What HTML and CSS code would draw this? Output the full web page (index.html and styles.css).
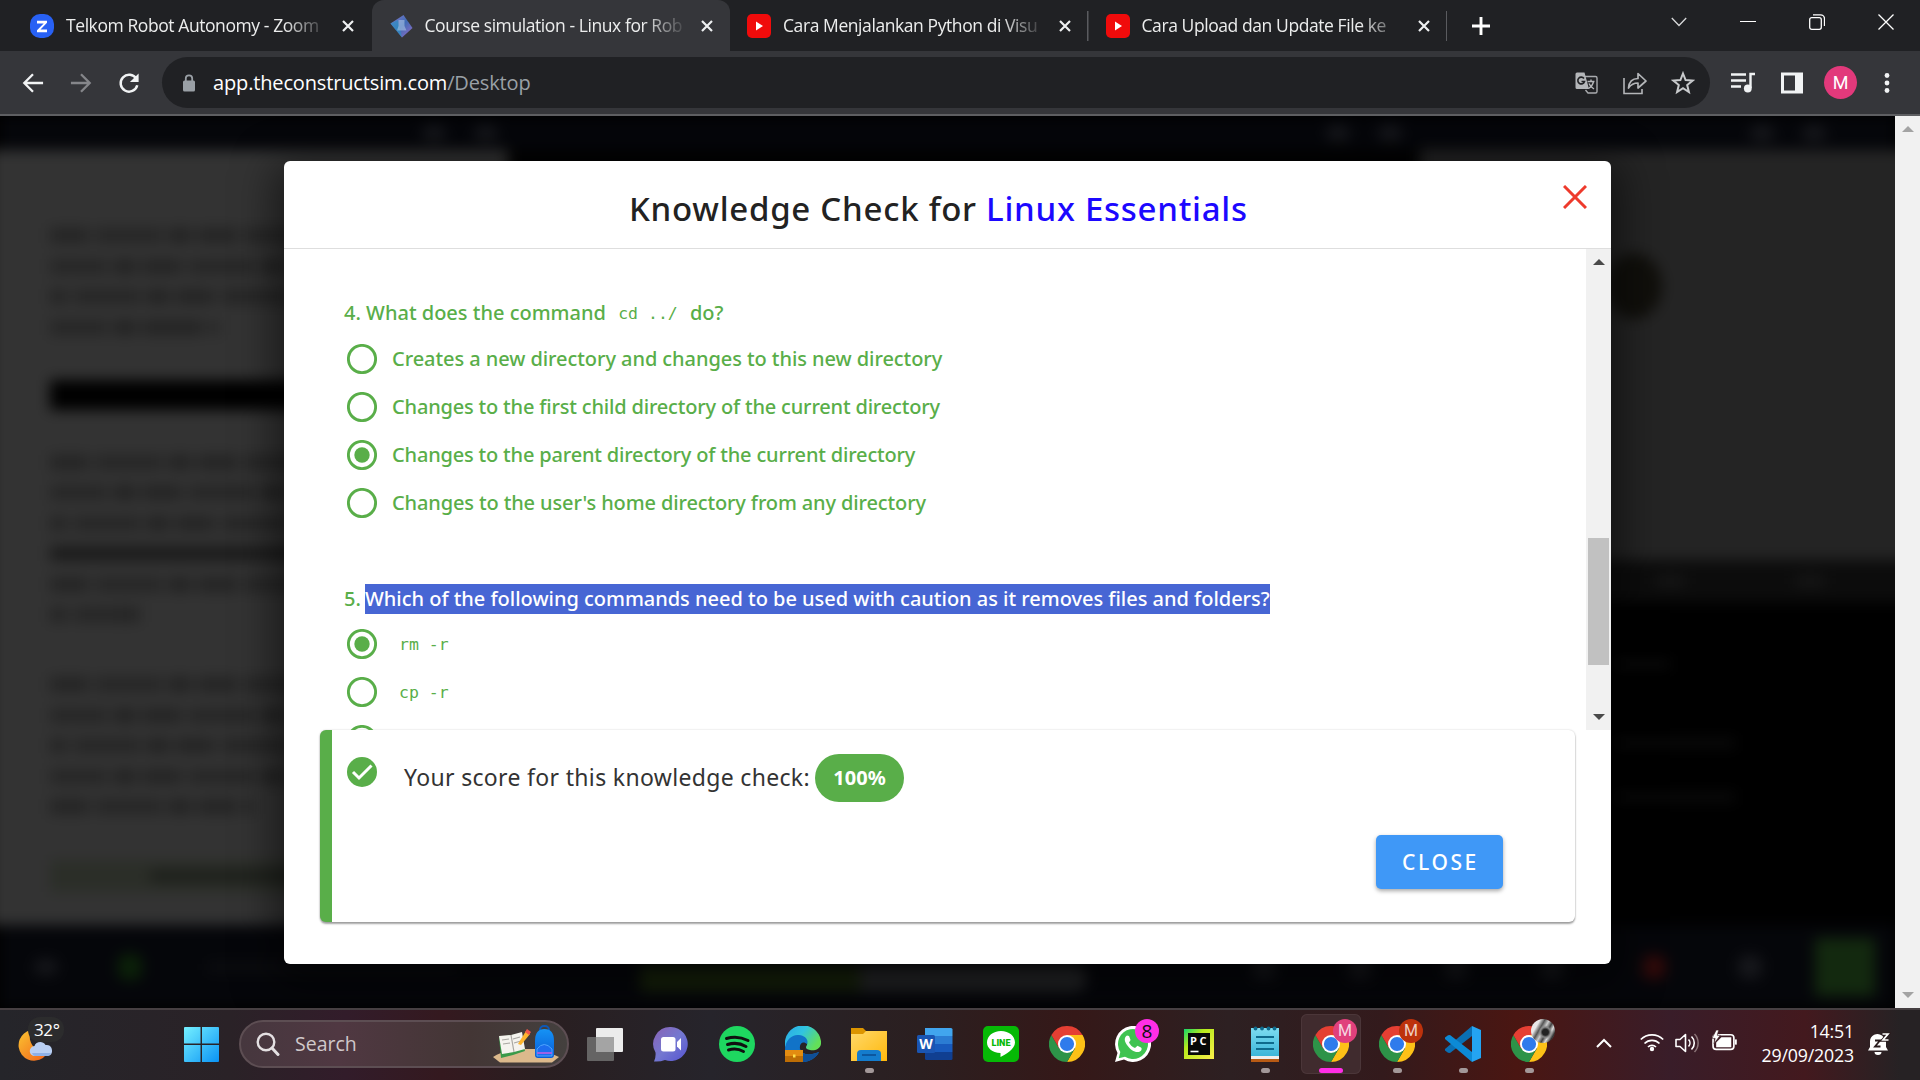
FILE: index.html
```html
<!DOCTYPE html>
<html lang="en">
<head>
<meta charset="utf-8">
<title>Course simulation - Linux for Rob</title>
<link rel="stylesheet" href="styles.css">
</head>
<body>
<svg class="defs" width="0" height="0" aria-hidden="true">
  <defs>
    <linearGradient id="gMoon" x1="0" y1="0" x2="1" y2="1"><stop offset="0" stop-color="#fbc531"/><stop offset="1" stop-color="#f2601a"/></linearGradient>
    <linearGradient id="gWin" x1="0" y1="0" x2="1" y2="1"><stop offset="0" stop-color="#75f0ff"/><stop offset="1" stop-color="#0a93f5"/></linearGradient>
    <linearGradient id="gChat" x1="0" y1="0" x2="1" y2="1"><stop offset="0" stop-color="#8a62b4"/><stop offset=".5" stop-color="#7478d0"/><stop offset="1" stop-color="#5553d2"/></linearGradient>
    <linearGradient id="gEdge" x1="0" y1="0" x2="1" y2=".5"><stop offset="0" stop-color="#28a8e8"/><stop offset=".5" stop-color="#31c4e0"/><stop offset="1" stop-color="#63df58"/></linearGradient>
    <linearGradient id="gFold" x1="0" y1="0" x2="1" y2="1"><stop offset="0" stop-color="#ffd96a"/><stop offset="1" stop-color="#ffb80c"/></linearGradient>
    <linearGradient id="gPc" x1="0" y1="0" x2="1" y2="1"><stop offset="0" stop-color="#12d66b"/><stop offset=".35" stop-color="#b7ea1c"/><stop offset="1" stop-color="#fcf04b"/></linearGradient>
    <linearGradient id="gNote" x1="0" y1="0" x2="0" y2="1"><stop offset="0" stop-color="#7ddcf0"/><stop offset="1" stop-color="#3cb6da"/></linearGradient>
    <linearGradient id="gBag" x1="0" y1="0" x2="0" y2="1"><stop offset="0" stop-color="#1593f5"/><stop offset="1" stop-color="#0a5bd6"/></linearGradient>
    <linearGradient id="gCube" x1="0" y1="0" x2="1" y2="1"><stop offset="0" stop-color="#8b7bd0"/><stop offset=".5" stop-color="#3f6cb5"/><stop offset="1" stop-color="#9a6cc8"/></linearGradient>
    <symbol id="chrome" viewBox="0 0 36 36">
      <path d="M18 9h15.59A18 18 0 0 1 18 36l7.8-13.5Z" fill="#fdc117"/>
      <path d="M2.41 9 10.2 22.5 18 27l7.8-4.5L18 36A18 18 0 0 1 2.41 9Z" fill="#2d9348"/>
      <path d="M18 9h15.59A18 18 0 0 0 2.41 9l7.8 13.5Z" fill="#e53f33"/>
      <circle cx="18" cy="18" r="9" fill="#fff"/><circle cx="18" cy="18" r="7.1" fill="#2f7bec"/>
    </symbol>
    <symbol id="close" viewBox="0 0 14 14"><path d="M2 2l10 10M12 2 2 12" stroke="#eef0f1" stroke-width="2.2"/></symbol>
    <symbol id="youtube" viewBox="0 0 24 24"><rect width="24" height="24" rx="5" fill="#f00b0b"/><path d="M9 7.500v9l7-4.500z" fill="#fff"/></symbol>
    <symbol id="radio" viewBox="0 0 30 30"><circle cx="15" cy="15" r="13.6" fill="none" stroke="#59ae49" stroke-width="2.9"/></symbol>
    <symbol id="radio-on" viewBox="0 0 30 30"><circle cx="15" cy="15" r="13.6" fill="none" stroke="#59ae49" stroke-width="2.9"/><circle cx="15" cy="15" r="7.7" fill="#59ae49"/></symbol>
  </defs>
</svg>

<div class="screen">
  <header class="tabs">
    <div class="tab">
      <svg class="fav" viewBox="0 0 24 24"><rect width="24" height="24" rx="10" fill="#2861f4"/><path d="M7 6.800h10v2L10.500 15.500H17v2.700H7v-2l6.700-6.700H7z" fill="#fff"/></svg>
      <span class="tab-title">Telkom Robot Autonomy - Zoom</span>
      <svg class="tab-x"><use href="#close"/></svg>
    </div>
    <div class="tab active">
      <svg class="fav" viewBox="0 0 24 24"><path d="M14.500 1 23.500 14 13 23.500 1.500 9.500z" fill="url(#gCube)"/><path d="M1.500 9.500 9 6l4 17.500z" fill="#2f8fc0" opacity=".7"/><path d="M9.500 6h6v6l2 4.500H8l1.500-4.500z" fill="#a9c3e2" opacity=".6"/></svg>
      <span class="tab-title">Course simulation - Linux for Rob</span>
      <svg class="tab-x"><use href="#close"/></svg>
    </div>
    <div class="tab sep">
      <svg class="fav"><use href="#youtube"/></svg>
      <span class="tab-title">Cara Menjalankan Python di Visu</span>
      <svg class="tab-x"><use href="#close"/></svg>
    </div>
    <div class="tab sep">
      <svg class="fav"><use href="#youtube"/></svg>
      <span class="tab-title">Cara Upload dan Update File ke</span>
      <svg class="tab-x"><use href="#close"/></svg>
    </div>
    <svg class="plus" viewBox="0 0 18 18"><path d="M9 0v18M0 9h18" stroke="#fff" stroke-width="2.900"/></svg>
    <div class="winctl">
      <svg viewBox="0 0 16 16"><path d="M.8 4 8 11.500 15.200 4" fill="none" stroke="#d8d9da" stroke-width="1.300"/></svg>
      <svg viewBox="0 0 16 16"><path d="M0 7.500h16" stroke="#fff" stroke-width="1"/></svg>
      <svg viewBox="0 0 16 16"><rect x=".7" y="3.700" width="11.600" height="11.600" rx="2" fill="none" stroke="#fff" stroke-width="1.300"/><path d="M4 .8h7.500a4 4 0 0 1 4 4V12" fill="none" stroke="#fff" stroke-width="1.300"/></svg>
      <svg viewBox="0 0 16 16"><path d="M.5.5l15 15M15.500.5l-15 15" stroke="#fff" stroke-width="1.300"/></svg>
    </div>
  </header>

  <div class="toolbar">
    <div class="nav">
      <svg viewBox="0 0 24 24"><path d="M23 12H3.500M12 2.500 2.500 12l9.500 9.500" fill="none" stroke="#f1f3f4" stroke-width="2.500"/></svg>
      <svg viewBox="0 0 24 24"><path d="M1 12h19.500M12 2.500l9.500 9.500-9.500 9.500" fill="none" stroke="#85868a" stroke-width="2.500"/></svg>
      <svg viewBox="0 0 24 24"><path d="M20 7.500A9.200 9.200 0 1 0 21 14.500" fill="none" stroke="#f1f3f4" stroke-width="2.700"/><path d="M22.500 1.500v9.500H13z" fill="#f1f3f4"/></svg>
    </div>
    <div class="omnibox">
      <svg class="lock" viewBox="0 0 14 18"><rect x="1" y="6.500" width="12" height="11" rx="1.500" fill="#9aa0a6"/><path d="M3.800 7V4.500a3.200 3.200 0 0 1 6.400 0V7" fill="none" stroke="#9aa0a6" stroke-width="1.800"/></svg>
      <span class="url">app.theconstructsim.com<span class="path">/Desktop</span></span>
      <div class="omni-icons">
        <svg viewBox="0 0 24 24"><path d="M9 5.500h11.500a1.500 1.500 0 0 1 1.500 1.500v13.500a1.500 1.500 0 0 1-1.500 1.500H13l-2.500-3" fill="none" stroke="#a9abae" stroke-width="1.400"/><path d="M2 1.500h7.500L14 18H2a1.500 1.500 0 0 1-1.500-1.500V3A1.500 1.500 0 0 1 2 1.500z" fill="#b4b6b9"/><path d="M9 7.500A3.400 3.400 0 1 0 9.500 10.500H6.500" fill="none" stroke="#202124" stroke-width="1.600"/><path d="M12.500 10.500h7M16 8.500v2M18.500 10.500c-.7 3.500-2.500 5.500-5 7M14 12.500c1 2.500 2.500 4 5 5.500" fill="none" stroke="#b4b6b9" stroke-width="1.400"/></svg>
        <svg viewBox="0 0 24 24"><path d="M1 7v15.500h18V18" fill="none" stroke="#b4b6b9" stroke-width="1.600"/><path d="M5.500 17c.5-6 4-9.500 9.500-9.500v-5L23 10l-8 7v-5c-4 0-7 1.500-9.500 5z" fill="none" stroke="#b4b6b9" stroke-width="1.700" stroke-linejoin="round"/></svg>
        <svg viewBox="0 0 24 24"><path d="m12 2.500 2.600 6.600 7 .5-5.400 4.500 1.700 6.900-5.900-3.800L6.100 21l1.700-6.900L2.400 9.600l7-.5z" fill="none" stroke="#c8cacc" stroke-width="2"/></svg>
      </div>
    </div>
    <div class="actions">
      <svg viewBox="0 0 24 24"><path d="M0 3.500h15M0 9.500h15M0 15.500h10" stroke="#f1f3f4" stroke-width="2.400"/><path d="M24 3h-4.500v14" fill="none" stroke="#f1f3f4" stroke-width="2.400"/><circle cx="16.800" cy="17.500" r="3.900" fill="#f1f3f4"/></svg>
      <svg viewBox="0 0 24 24"><path fill-rule="evenodd" d="M1 1.500h22v21H1zM4 4.500v15h11v-15z" fill="#f1f3f4"/></svg>
      <span class="avatar">M</span>
      <svg class="kebab" viewBox="0 0 24 24"><g fill="#f1f3f4"><circle cx="12" cy="4.500" r="2.400"/><circle cx="12" cy="12" r="2.400"/><circle cx="12" cy="19.500" r="2.400"/></g></svg>
    </div>
  </div>

  <main class="page">
    <div class="stage">
      <div class="backdrop">
        <div class="b-top"><i class="dot"></i><i class="dot"></i><i class="dot gap"></i><i class="dot"></i><i class="dot gap2"></i><i class="dot"></i></div>
        <div class="b-main">
          <div class="b-notes">
            <div class="para"><i class="w9"></i><i></i><i></i><i class="w4"></i></div>
            <div class="strip"></div>
            <div class="para p2"><i></i><i></i><i></i><i class="dark"></i><i></i><i class="w2"></i></div>
            <div class="para p3"><i></i><i></i><i></i><i></i><i class="w5"></i></div>
            <div class="task"><i></i></div>
          </div>
          <div class="b-mid"></div>
          <div class="b-right">
            <div class="sim"><i></i></div>
            <div class="term-bar"><i></i><i></i><i></i></div>
            <div class="term"><div class="lines"><i></i><i></i><i></i></div><div class="thumb"></div></div>
          </div>
        </div>
        <div class="b-foot">
          <i class="dot"></i><i class="dot green"></i><i class="txt"></i>
          <div class="meter"><i></i><i></i></div>
          <div class="foot-icons"><i class="dot"></i><i class="dot"></i><i class="dot"></i><i class="dot"></i><i class="dot red"></i><i class="dot"></i></div>
          <i class="help"></i>
        </div>
      </div>

      <section class="modal">
        <div class="modal-head">
          <h1>Knowledge Check for <b>Linux Essentials</b></h1>
          <svg class="modal-x" viewBox="0 0 24 24"><path d="M1 1l22 22M23 1 1 23" stroke="#ee3a2c" stroke-width="3"/></svg>
        </div>
        <div class="modal-body">
          <div class="quiz">
            <div class="question">
              <p class="ask a4">4. What does the command <code>cd ../</code> do?</p>
              <label class="opt"><svg><use href="#radio"/></svg><span class="o1">Creates a new directory and changes to this new directory</span></label>
              <label class="opt"><svg><use href="#radio"/></svg><span class="o2">Changes to the first child directory of the current directory</span></label>
              <label class="opt"><svg><use href="#radio-on"/></svg><span class="o3">Changes to the parent directory of the current directory</span></label>
              <label class="opt"><svg><use href="#radio"/></svg><span class="o4">Changes to the user's home directory from any directory</span></label>
            </div>
            <div class="question">
              <p class="ask a5"><span class="num">5.</span><mark>Which of the following commands need to be used with caution as it removes files and folders?</mark></p>
              <label class="opt"><svg><use href="#radio-on"/></svg><code>rm -r</code></label>
              <label class="opt"><svg><use href="#radio"/></svg><code>cp -r</code></label>
              <label class="opt"><svg><use href="#radio"/></svg></label>
            </div>
          </div>
          <div class="scroll">
            <svg viewBox="0 0 12 6"><path d="M0 6 6 0l6 6z" fill="#4a4a4a"/></svg>
            <i></i>
            <svg viewBox="0 0 12 6"><path d="M0 0h12L6 6z" fill="#4a4a4a"/></svg>
          </div>
        </div>
        <div class="score">
          <div class="score-row">
            <svg class="tick" viewBox="0 0 30 30"><circle cx="15" cy="15" r="15" fill="#59ae49"/><path d="m6 15 6 6L24.500 8.500" fill="none" stroke="#fff" stroke-width="3"/></svg>
            <span class="score-text">Your score for this knowledge check:</span>
            <span class="chip">100%</span>
          </div>
          <button class="close-btn">CLOSE</button>
        </div>
      </section>
    </div>
    <div class="page-scroll">
      <svg viewBox="0 0 12 6"><path d="M0 6 6 0l6 6z" fill="#a3a3a3"/></svg>
      <svg viewBox="0 0 12 6"><path d="M0 0h12L6 6z" fill="#a3a3a3"/></svg>
    </div>
  </main>

  <footer class="taskbar">
    <div class="weather">
      <svg width="36" height="36" viewBox="0 0 36 36"><path d="M13 3A15.500 15.500 0 1 0 30 25C18 27 8 15 13 3z" fill="url(#gMoon)"/><path d="M17 29a5 5 0 0 1-.5-10c1-4 8-6 11-1 6-1 7 5 6.500 7-.5 3-3 4-5 4z" fill="#b9cff3"/><path d="M14 26h19c-1 2-2.500 3-4 3H17c-1.500 0-2.500-1.500-3-3z" fill="#8fb0e6"/></svg>
      <span>32°</span>
    </div>
    <svg class="start" viewBox="0 0 36 36"><path d="M1 0h16v17H0V1a1 1 0 0 1 1-1zM18.500 0H35a1 1 0 0 1 1 1v16H18.500zM0 18.500h17V36H1a1 1 0 0 1-1-1zM18.500 18.500H36V35a1 1 0 0 1-1 1H18.500z" fill="url(#gWin)"/></svg>
    <div class="search">
      <svg class="mag" viewBox="0 0 24 24"><circle cx="10" cy="10" r="8.300" fill="none" stroke="#e4e0e2" stroke-width="2.400"/><path d="m16 16 6 6.500" stroke="#e4e0e2" stroke-width="3" stroke-linecap="round"/></svg>
      <span>Search</span>
      <svg class="art" viewBox="0 0 68 38"><path d="M1 32q12-8 30-8h18l18 8-7 5.500H8z" fill="#dcb98c"/><path d="m7 12 13-2 9-2 4 18-12 4-12 3z" fill="#3a9a4a"/><path d="m7 11 12-1 11-3 3 17-11 3-12 2z" fill="#f5f3ee"/><path d="m19 10 3 17M10 15l7-1M11 19l7-1M21 14l7-2M22 18l7-2" stroke="#a9a7a2" stroke-width="1.200"/><path d="M26 19 34 6l4 3-9 11z" fill="#ffb52e"/><path d="m33 7 2-3 4 3-2 3z" fill="#f2574c"/><rect x="48" y="1" width="9" height="8" rx="4" fill="none" stroke="#0d58b8" stroke-width="2"/><path d="M43 16q0-12 9.500-12T62 16v14q0 3-3 3H46q-3 0-3-3z" fill="url(#gBag)"/><path d="M45 24q7-9 15 0v7H45z" fill="#1d6dee" stroke="#4ea6ff"/><path d="M45 28h15" stroke="#9c62e6" stroke-width="2"/></svg>
    </div>
    <nav class="apps">
      <div class="app"><svg viewBox="0 0 36 36"><rect x="9" y="2" width="27" height="24" rx="1" fill="#ececec"/><rect y="11" width="27" height="24" rx="1" fill="#6c6c6c" opacity=".9"/><rect x="9" y="11" width="18" height="15" fill="#a4a4a4"/></svg></div>
      <div class="app"><svg viewBox="0 0 36 36"><path d="M18 1a17 17 0 1 1-6 33q-5 2-11 1.500 2-4 1.500-9A17 17 0 0 1 18 1z" fill="url(#gChat)"/><rect x="8" y="11" width="14.500" height="14.500" rx="2.500" fill="#fff"/><path d="m24 16 4-4v12.500l-4-4z" fill="#fff"/></svg></div>
      <div class="app"><svg viewBox="0 0 36 36"><circle cx="18" cy="18" r="18" fill="#1ed760"/><path d="M7.500 12.500q11-3.500 21.500 2M8.500 18.500q10-3 18.500 2M9.500 24q8-2.500 15 1.500" fill="none" stroke="#101010" stroke-width="3" stroke-linecap="round"/></svg></div>
      <div class="app"><svg viewBox="0 0 36 36"><path d="M0 20A18 18 0 0 1 36 15c1 7-5 10-11 9-4-1-5-2-3-5 1-4-2-8-7-8S0 16 0 24z" fill="url(#gEdge)"/><path d="M0 24C0 13 8 8 14 9c6 .5 10 5 8 9-3-3-8-2-7 5 2 6 9 7 19 3-4 8-13 11-20 10C5 35 0 30 0 24z" fill="#1173c8"/><path d="M15 23c2 6 9 7 19 3-4 8-13 11-20 10z" fill="#0f4f97"/><rect y="24" width="18" height="12" fill="#bd6d05"/><path d="M0 24h18v6H0z" fill="#e38c11"/><rect x="8" y="28.500" width="2.500" height="3" fill="#ffdf48"/></svg></div>
      <div class="app run"><svg viewBox="0 0 36 36"><path d="M0 2h12l3 3v5H0z" fill="#dc9500"/><path d="M0 8h12l3-3h21v30H0z" fill="url(#gFold)"/><path d="M6 35V28q0-4 4-4h16q4 0 4 4v7z" fill="#147ccd"/><path d="M11 29h14" stroke="#0b4f93" stroke-width="1.600"/></svg></div>
      <div class="app"><svg viewBox="0 0 36 36"><path d="M8 2h26a1.500 1.500 0 0 1 1.500 1.500V10H8z" fill="#41a5ee"/><path d="M8 10h27.500v8H8z" fill="#2b7cd3"/><path d="M8 18h27.500v8H8z" fill="#185abd"/><path d="M8 26h27.500v6.500A1.500 1.500 0 0 1 34 34H9.500A1.500 1.500 0 0 1 8 32.500z" fill="#103f91"/><rect y="9" width="18" height="18" rx="1.500" fill="#1a55b2"/><text x="9" y="23" class="word-w">W</text></svg></div>
      <div class="app"><svg viewBox="0 0 36 36"><rect width="36" height="36" rx="5" fill="#06b906"/><path d="M18 5c8 0 14 5 14 11.500C32 23 22 29 17.500 31v-4C9 26.500 4 22 4 16.500 4 10 10 5 18 5z" fill="#fff"/><text x="18" y="20" class="line-t" textLength="19" lengthAdjust="spacingAndGlyphs">LINE</text></svg></div>
      <div class="app"><svg><use href="#chrome"/></svg></div>
      <div class="app"><svg viewBox="0 0 36 36"><path d="M0 36 2.500 27A18 18 0 1 1 9 33.500z" fill="#fff"/><path d="M3.700 32.300 5.300 26A15 15 0 1 1 10 30.700z" fill="#3fc351"/><path d="M12 9.500c-3 2-3 5.500 0 9.500 4 5.500 9 8.500 13 6.500 2-1 2-3.500 1-4l-3.500-1.800-2.500 2.300c-3-1-5-3.500-6-5.500l1.600-2.500L14 10z" fill="#fff"/></svg><span class="badge count">8</span></div>
      <div class="app"><svg viewBox="0 0 36 36"><rect x="3" y="3" width="30" height="30" fill="url(#gPc)"/><rect x="7" y="7" width="22" height="22" fill="#080a08"/><text x="9" y="18.500" class="pc-t" textLength="16.500">PC</text><path d="M9.500 25.500h8" stroke="#fff" stroke-width="1.600"/></svg></div>
      <div class="app run"><svg viewBox="0 0 36 36"><path d="M4 30h28v6H4z" fill="#b85a14"/><path d="M4 28h28v5H4z" fill="#eee"/><path d="M4 2h28v28H4z" fill="url(#gNote)"/><path d="M9 11h18M9 17h18M9 23h18" stroke="#0e6a8c" stroke-width="2"/><g fill="#0e6a8c"><circle cx="8.500" cy="2.500" r="1.900"/><circle cx="15" cy="2.500" r="1.900"/><circle cx="21.500" cy="2.500" r="1.900"/><circle cx="27.500" cy="2.500" r="1.900"/></g></svg></div>
      <div class="app current"><svg><use href="#chrome"/></svg><span class="badge pink">M</span></div>
      <div class="app run"><svg><use href="#chrome"/></svg><span class="badge rust">M</span></div>
      <div class="app run"><svg viewBox="0 0 36 36"><path d="M27 0v10L5 27l-2-.2L0 24.500v-1.500z" fill="#0a6fb4"/><path d="M27 36V26L5 9l-2 .2L0 11.500V13z" fill="#0c8ad6"/><path d="m27 0 9 4v28l-9 4z" fill="#24a4f2"/></svg></div>
      <div class="app run"><svg><use href="#chrome"/></svg><span class="badge photo"></span></div>
    </nav>
    <div class="tray">
      <svg class="t-up" viewBox="0 0 18 18"><path d="m2 13 7-7 7 7" fill="none" stroke="#fff" stroke-width="2"/></svg>
      <svg class="t-wifi" viewBox="0 0 24 24"><g fill="none" stroke="#fff" stroke-width="1.700"><path d="M.8 9.500a16 16 0 0 1 22.400 0M4.500 13.500a10.600 10.600 0 0 1 15 0M8 17a5.800 5.800 0 0 1 8 0"/></g><circle cx="12" cy="19" r="2.200" fill="#fff"/></svg>
      <svg class="t-vol" viewBox="0 0 24 24"><path d="M1 8.500h4L10.500 3.500v17L5 15.500H1z" fill="none" stroke="#fff" stroke-width="1.600" stroke-linejoin="round"/><path d="M13.500 8.500a5 5 0 0 1 0 7M16.500 5.500a9 9 0 0 1 0 13" fill="none" stroke="#fff" stroke-width="1.600"/><path d="M19.500 3a13 13 0 0 1 0 18" fill="none" stroke="#8b7478" stroke-width="1.500"/></svg>
      <svg class="t-bat" viewBox="0 0 24 24"><rect x="1" y="5.500" width="20" height="14" rx="3" fill="none" stroke="#fff" stroke-width="1.600"/><path d="M4 17.500V13l5-5h9.500v9.500z" fill="#fff"/><path d="M22 10h1.800v5H22z" fill="#fff"/><path d="M4 1 0 9h3l-1 5 6-8H5l1.500-5z" fill="#fff" stroke="#3a1c20" stroke-width=".6"/></svg>
      <div class="clock"><span>14:51</span><span>29/09/2023</span></div>
      <svg class="t-bell" viewBox="0 0 24 24"><path d="M1 18.500 3 15V9.500a7.500 7.500 0 0 1 12-6L19 8v7l2 3.500zM7.500 20h7a3.500 3 0 0 1-7 0z" fill="#fff"/><path d="M16 2h5l-5 6h5.500" fill="none" stroke="#2a1c1e" stroke-width="3.500"/><path d="M15.500 2h5.500l-5 6h5.500" fill="none" stroke="#fff" stroke-width="1.700"/><path d="M8 8.500h5l-5 6h5.500" fill="none" stroke="#2a1c1e" stroke-width="1.800"/></svg>
    </div>
  </footer>
</div>
</body>
</html>
```
FILE: styles.css
```css
* { box-sizing: border-box; }
body { margin: 0; background: #000; overflow: hidden; }
svg { display: block; flex: none; }
.defs { position: absolute; }
.screen {
  width: 1920px; height: 1080px; display: grid;
  grid-template-rows: 51px 65px 892px 72px;
  font-family: "Open Sans", "Noto Sans", sans-serif;
}

/* tab strip */
.tabs { background: #202124; display: flex; padding-left: 13px; }
.tab { width: 358.500px; height: 51px; display: flex; align-items: center; padding-left: 17px; flex: none; }
.tab.sep { background: linear-gradient(#5a5b5f, #5a5b5f) right 0 top 11px / 1.500px 30px no-repeat; }
.tab.active { background: #35363a; border-radius: 12px 12px 0 0; }
.fav { width: 24px; height: 24px; }
.tab-title {
  width: 260px; margin: -2px 0 0 12px; overflow: hidden; white-space: nowrap;
  color: #eceded; font-size: 17.500px; letter-spacing: -.42px;
  mask-image: linear-gradient(90deg, #000 84%, transparent 101%);
}
.tab-x { width: 14px; height: 14px; margin-left: 15px; }
.plus { width: 18px; height: 18px; margin: 17px 0 0 25px; }
.winctl { display: flex; gap: 53px; margin: 14px 26px 0 auto; }
.winctl svg { width: 16px; height: 16px; }

/* toolbar */
.toolbar { background: #35363a; border-bottom: 2px solid #5e5f62; display: flex; align-items: flex-start; padding-top: 6px; }
.nav { display: flex; gap: 26px; margin: 15px 20px 0 22px; width: 120px; flex: none; }
.nav svg { width: 22px; height: 22px; }
.omnibox { width: 1548px; height: 51px; border-radius: 26px; background: #202124; display: flex; align-items: center; padding: 0 15px 0 20px; }
.lock { width: 14px; height: 18px; }
.url { margin-left: 17px; color: #fff; font-size: 20px; letter-spacing: -.15px; }
.path { color: #9aa0a6; }
.omni-icons { display: flex; gap: 24px; margin-left: auto; }
.omni-icons svg { width: 24px; height: 24px; }
.actions { display: flex; align-items: center; gap: 25px; height: 51px; margin-left: 21px; }
.actions svg { width: 24px; height: 24px; }
.avatar { width: 33px; height: 33px; margin: 0 -5px; border-radius: 50%; background: #e2397b; color: #fff; font: 18px/33px Roboto, sans-serif; text-align: center; }
.actions .kebab { margin-left: -2px; }

/* page area: blurred workspace with dialog stacked above it */
.page { display: grid; grid-template-columns: 1895px 25px; }
.stage { display: grid; height: 892px; overflow: hidden; background: #000; }
.backdrop, .modal { grid-area: 1 / 1; }
.backdrop { height: 892px; display: grid; grid-template-rows: 34px 775px 83px; filter: blur(7px); }
.backdrop i { display: block; }
.b-top, .b-foot { background: #05060a; display: flex; align-items: center; }
.dot { width: 24px; height: 16px; border-radius: 8px; background: #16171b; flex: none; }
.b-top { padding-left: 422px; gap: 28px; }
.gap { margin-left: 800px; }
.gap2 { margin-left: 320px; }
.b-main { display: grid; grid-template-columns: 508px 912px 475px; }
.b-notes { background: #333; margin-left: -10px; padding: 73px 0 0 60px; }
.para { display: flex; flex-direction: column; gap: 15.500px; padding-top: 5px; }
.para i { height: 15px; background: repeating-linear-gradient(90deg, #242424 0 38px, #303030 38px 46px, #262626 46px 112px, #303030 112px 119px, #232323 119px 141px, #303030 141px 148px); }
.para i:nth-child(2n) { background-position-x: -55px; }
.para i:nth-child(3n) { background-position-x: -22px; }
.para .w9 { width: 95%; }
.para .w4 { width: 170px; }
.para .w2 { width: 90px; }
.para .w5 { width: 205px; }
.para .dark { background: #1b1b1b; }
.strip { height: 30px; margin-top: 45px; background: #000; }
.p2 { padding-top: 45px; }
.p3 { padding-top: 55px; }
.task { height: 32px; margin-top: 46px; background: #2b2e28; padding: 10px 0 0 100px; }
.task i { height: 12px; background: #1d1f1b; }
.b-mid { background: #020202; }
.b-right { display: grid; grid-template-rows: 410px 42px 323px; margin-right: -10px; }
.sim { background: #242424; padding: 103px 0 0 186px; }
.sim i { width: 56px; height: 66px; border-radius: 50%; background: #100f0b; }
.term-bar { background: #0c0c0c; display: flex; align-items: center; gap: 110px; padding-left: 235px; }
.term-bar i { width: 30px; height: 10px; background: #171717; }
.term { background: #000; display: flex; justify-content: space-between; padding-right: 15px; }
.lines { padding: 58px 0 0 195px; display: grid; gap: 46px; align-content: start; }
.lines i { width: 120px; height: 8px; background: #0d0d0d; }
.lines i:first-child { width: 55px; margin-bottom: 25px; }
.thumb { width: 25px; height: 272px; background: linear-gradient(#2b2b2b 0 25%, #202020 30% 85%, #2b2b2b); }
.b-foot { padding-left: 34px; }
.green { background: #0b2109; height: 26px; margin-left: 60px; }
.txt { width: 250px; height: 10px; margin-left: 65px; background: #0c0d10; }
.meter { display: flex; margin: 23px 0 0 183px; }
.meter i { width: 220px; height: 26px; background: #16210a; }
.meter i + i { width: 227px; background: #232426; border-radius: 0 13px 13px 0; }
.foot-icons { display: flex; gap: 72px; margin-left: 165px; }
.foot-icons .dot { height: 24px; }
.foot-icons .red { background: #300a0a; margin-left: 6px; }
.help { width: 60px; height: 58px; margin-left: 53px; background: #13290f; }

/* dialog */
.modal { width: 1327px; height: 803px; margin: 45px 0 0 284px; background: #fff; border-radius: 6px; box-shadow: 0 12px 40px 10px rgba(0, 0, 0, .5); z-index: 1; font-family: "Noto Sans", sans-serif; }
.modal-head { height: 88px; border-bottom: 1.500px solid #dedede; display: flex; justify-content: space-between; padding: 24px 24px 0 345px; }
h1 { margin: 0; font-size: 33px; line-height: 48px; font-weight: 500; color: #222; letter-spacing: .74px; white-space: nowrap; }
h1 b { font-weight: 500; color: #1c08ff; }
.modal-x { width: 24px; height: 24px; }
.modal-body { height: 481px; display: flex; justify-content: space-between; overflow: hidden; }
.quiz { padding: 49px 0 0 60px; color: #59ae49; font-size: 20px; font-weight: 500; white-space: nowrap; }
.question { height: 285px; }
.ask { margin: 0; height: 36.500px; line-height: 30px; display: flex; white-space: pre; }
.a5 { padding-top: 1px; }
code { font: 16.500px/30px "DejaVu Sans Mono", monospace; }
.a4 code { margin: 0 7px; padding-top: 1px; }
.num { width: 21px; }
mark { background: #4766d4; color: #fff; height: 30px; letter-spacing: -.02px; }
.opt { height: 48px; display: flex; align-items: center; padding-left: 3px; }
.opt svg { width: 30px; height: 30px; margin-right: 15px; }
.opt code { margin: 3px 0 0 7px; }
.o1 { letter-spacing: -.065px; }
.o2, .o3 { letter-spacing: -.18px; }
.o4 { letter-spacing: -.13px; }
.scroll { width: 25px; background: #f1f1f1; display: flex; flex-direction: column; align-items: center; padding: 10px 0; }
.scroll svg, .page-scroll svg { width: 12px; height: 6px; }
.scroll i { width: 21px; height: 127px; margin: 273px 0 auto; background: #c1c1c1; }
.score { height: 192px; width: 1255px; margin-left: 36px; border-left: 12px solid #59ae49; border-radius: 6px; background: #fff; box-shadow: 0 2px 2px rgba(0, 0, 0, .35), 0 0 2px rgba(0, 0, 0, .2); padding: 24px 72px 0 15px; display: flex; flex-direction: column; }
.score-row { display: flex; height: 48px; align-items: center; }
.tick { width: 30px; height: 30px; margin: -13px 27px 0 0; }
.score-text { color: #333; font-size: 23px; width: 411px; margin-top: -2px; letter-spacing: .33px; white-space: nowrap; }
.chip { width: 89px; height: 48px; border-radius: 24px; background: #59ae49; color: #fff; font-size: 20px; font-weight: 700; line-height: 48px; text-align: center; }
.close-btn { align-self: flex-end; width: 127px; height: 54px; margin-top: 33px; padding: 0 0 0 2px; border: 0; border-radius: 5px; background: #3f98f7; color: #fff; font: 500 21px "Noto Sans", sans-serif; letter-spacing: 2.600px; box-shadow: 0 2px 4px rgba(0, 0, 0, .35); }
.page-scroll { background: #f1f1f1; display: flex; flex-direction: column; align-items: center; justify-content: space-between; padding: 10px 0; }

/* taskbar */
.taskbar { border-top: 2px solid #463f42; display: flex; color: #fff; background: linear-gradient(90deg, #25252a, #2a2227 12%, #321c2a 18%, #34191f 23%, #291e20 28%, #26242b 37%, #2b1f20 48%, #351818 56%, #2d2022 64%, #331a1c 72%, #4a1612 79%, #391d29 87%, #43191e 94%, #262224 99%); }
.weather { width: 75px; padding: 17px 0 0 18px; display: grid; align-items: start; }
.weather > * { grid-area: 1 / 1; }
.weather span { width: 36px; height: 25px; margin: -10px 0 0 10px; border-radius: 12px; background: #2c2c2d; font-size: 17px; line-height: 25px; letter-spacing: -.4px; padding-left: 6px; }
.start { width: 35px; height: 35px; margin: 17px 20px 0 109px; }
.search { width: 330px; height: 48px; margin-top: 10px; border: 2px solid #5d4e53; border-radius: 24px; background: linear-gradient(90deg, #46373e, #503842 30%, #433635 70%, #44403e); display: flex; align-items: center; padding: 0 7px 0 15px; }
.mag { width: 24px; height: 24px; }
.search span { margin: -2px 0 0 15px; font-size: 19.500px; color: #d0c9cb; }
.art { width: 68px; height: 38px; margin-left: auto; }
.apps { display: flex; gap: 6px; margin-left: 6px; }
.app { width: 60px; height: 60px; margin-top: 4px; padding: 12px; border-radius: 6px; display: grid; position: relative; flex: none; }
.app svg { width: 36px; height: 36px; }
.app.run::after, .app.current::after { content: ""; position: absolute; left: 25.500px; bottom: 1px; width: 9px; height: 5px; border-radius: 3px; background: #a39899; }
.app.current { background: #402b2e; box-shadow: inset 0 0 0 1px #4b3639; }
.app.current::after { left: 18px; width: 24px; background: #ff2ee6; }
.word-w { font: 700 14px "Open Sans", sans-serif; fill: #fff; text-anchor: middle; }
.line-t { font: 900 9.500px Roboto, sans-serif; fill: #06b906; text-anchor: middle; }
.pc-t { font: 700 11px "Open Sans", sans-serif; fill: #fff; }
.badge { position: absolute; left: 32px; top: 5px; width: 24px; height: 24px; border-radius: 50%; font: 16px/24px Roboto, sans-serif; text-align: center; }
.count { background: #ff2ee6; color: #111; font: 19px/24px "Open Sans", sans-serif; }
.pink { background: #e0407c; color: #f6d5e1; }
.rust { background: #bd320c; color: #f0cfc2; }
.photo { background: radial-gradient(circle at 60% 55%, #222 0 3px, #888 5px, transparent 7px), linear-gradient(120deg, #e8e8e8 25%, #555 38%, #ccc 50%, #444 62%, #ddd 72%, #333 84%, #999); }
.tray { display: flex; margin-left: auto; padding-right: 29px; }
.t-up { width: 18px; height: 18px; margin: 24px 27px 0 0; }
.t-wifi { width: 24px; height: 24px; margin: 20px 11px 0 0; }
.t-vol { width: 24px; height: 24px; margin: 21px 13px 0 0; }
.t-bat { width: 25px; height: 25px; margin: 19px 24px 0 0; }
.clock { display: grid; grid-template-rows: 24px 24px; margin-top: 9px; width: 93px; text-align: right; font-size: 17.800px; line-height: 24px; letter-spacing: -.2px; white-space: nowrap; }
.t-bell { width: 24px; height: 24px; margin: 22px 0 0 13px; }
```
